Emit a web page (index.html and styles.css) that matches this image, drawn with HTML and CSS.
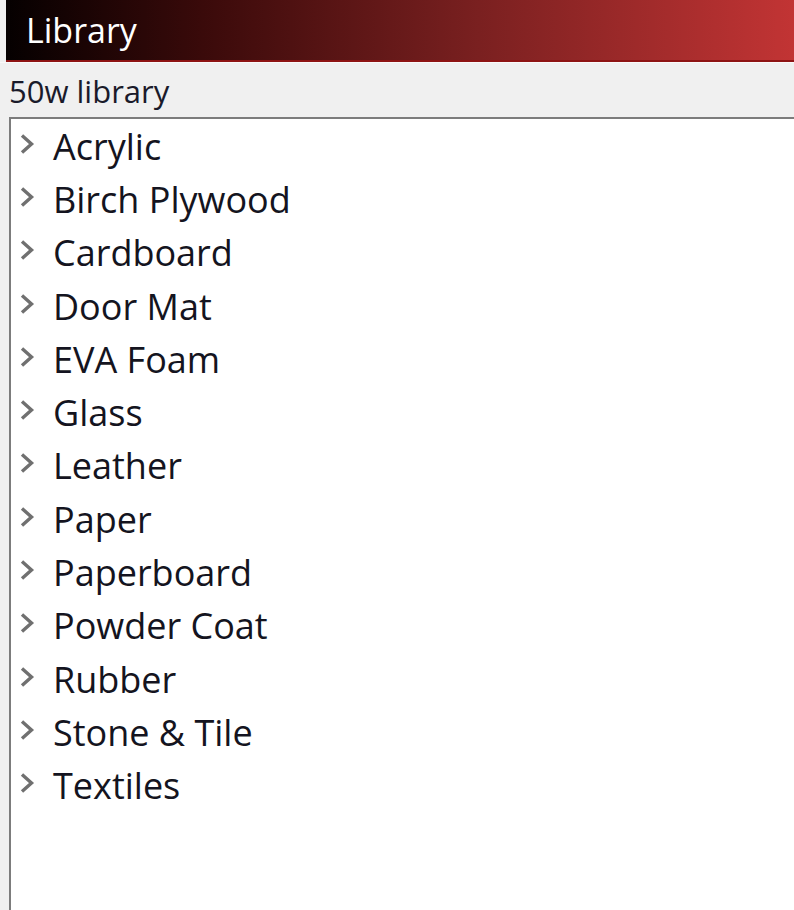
FILE: index.html
```html
<!DOCTYPE html>
<html>
<head>
<meta charset="utf-8">
<link rel="stylesheet" href="styles.css">
</head>
<body>
<div class="window">
  <div class="titlebar">Library</div>
  <div class="subtitle">50w library</div>
  <div class="listbox">
    <ul class="tree">
      <li class="item"><span class="chev"><svg viewBox="0 0 18 22" width="18" height="22"><path d="M4 2.5 L13.5 11 L4 19.5" fill="none" stroke="#707070" stroke-width="3.4"/></svg></span><span class="label">Acrylic</span></li>
      <li class="item"><span class="chev"><svg viewBox="0 0 18 22" width="18" height="22"><path d="M4 2.5 L13.5 11 L4 19.5" fill="none" stroke="#707070" stroke-width="3.4"/></svg></span><span class="label">Birch Plywood</span></li>
      <li class="item"><span class="chev"><svg viewBox="0 0 18 22" width="18" height="22"><path d="M4 2.5 L13.5 11 L4 19.5" fill="none" stroke="#707070" stroke-width="3.4"/></svg></span><span class="label">Cardboard</span></li>
      <li class="item"><span class="chev"><svg viewBox="0 0 18 22" width="18" height="22"><path d="M4 2.5 L13.5 11 L4 19.5" fill="none" stroke="#707070" stroke-width="3.4"/></svg></span><span class="label">Door Mat</span></li>
      <li class="item"><span class="chev"><svg viewBox="0 0 18 22" width="18" height="22"><path d="M4 2.5 L13.5 11 L4 19.5" fill="none" stroke="#707070" stroke-width="3.4"/></svg></span><span class="label">EVA Foam</span></li>
      <li class="item"><span class="chev"><svg viewBox="0 0 18 22" width="18" height="22"><path d="M4 2.5 L13.5 11 L4 19.5" fill="none" stroke="#707070" stroke-width="3.4"/></svg></span><span class="label">Glass</span></li>
      <li class="item"><span class="chev"><svg viewBox="0 0 18 22" width="18" height="22"><path d="M4 2.5 L13.5 11 L4 19.5" fill="none" stroke="#707070" stroke-width="3.4"/></svg></span><span class="label">Leather</span></li>
      <li class="item"><span class="chev"><svg viewBox="0 0 18 22" width="18" height="22"><path d="M4 2.5 L13.5 11 L4 19.5" fill="none" stroke="#707070" stroke-width="3.4"/></svg></span><span class="label">Paper</span></li>
      <li class="item"><span class="chev"><svg viewBox="0 0 18 22" width="18" height="22"><path d="M4 2.5 L13.5 11 L4 19.5" fill="none" stroke="#707070" stroke-width="3.4"/></svg></span><span class="label">Paperboard</span></li>
      <li class="item"><span class="chev"><svg viewBox="0 0 18 22" width="18" height="22"><path d="M4 2.5 L13.5 11 L4 19.5" fill="none" stroke="#707070" stroke-width="3.4"/></svg></span><span class="label">Powder Coat</span></li>
      <li class="item"><span class="chev"><svg viewBox="0 0 18 22" width="18" height="22"><path d="M4 2.5 L13.5 11 L4 19.5" fill="none" stroke="#707070" stroke-width="3.4"/></svg></span><span class="label">Rubber</span></li>
      <li class="item"><span class="chev"><svg viewBox="0 0 18 22" width="18" height="22"><path d="M4 2.5 L13.5 11 L4 19.5" fill="none" stroke="#707070" stroke-width="3.4"/></svg></span><span class="label">Stone &amp; Tile</span></li>
      <li class="item"><span class="chev"><svg viewBox="0 0 18 22" width="18" height="22"><path d="M4 2.5 L13.5 11 L4 19.5" fill="none" stroke="#707070" stroke-width="3.4"/></svg></span><span class="label">Textiles</span></li>
    </ul>
  </div>
</div>
</body>
</html>
```
FILE: styles.css
```css
html, body {
  margin: 0;
  padding: 0;
  height: 100%;
  overflow: hidden;
}
body {
  background: #f0f0f0;
  font-family: "Open Sans", "Noto Sans", sans-serif;
  color: #111;
}
.window {
  display: flex;
  flex-direction: column;
  height: 910px;
}
.titlebar {
  margin-left: 6px;
  height: 60px;
  border-bottom: 2px solid #8e1414;
  background: linear-gradient(to right, #050000 0%, #3a0a0a 25%, #7a2020 60%, #c23434 100%);
  color: #ffffff;
  font-size: 34px;
  line-height: 60px;
  padding-left: 20px;
  box-sizing: content-box;
}
.subtitle {
  height: 54px;
  padding-left: 9px;
  font-size: 31px;
  line-height: 56px;
  border-top: 1px solid #fafafa;
  color: #1a1a2a;
  font-weight: 500;
}
.listbox {
  flex: 1;
  margin-left: 9px;
  background: #ffffff;
  border-top: 2px solid #7c7c7c;
  border-left: 2px solid #7c7c7c;
}
.tree {
  list-style: none;
  margin: 0;
  padding: 1px 0 0 0;
}
.item {
  height: 53.3px;
  display: flex;
  align-items: center;
}
.chev {
  width: 18px;
  height: 22px;
  margin-left: 7px;
  margin-right: 17px;
  margin-bottom: 6px;
  display: flex;
}
.label {
  font-size: 36px;
  line-height: 1;
  color: #141420;
  font-weight: 500;
}
```
